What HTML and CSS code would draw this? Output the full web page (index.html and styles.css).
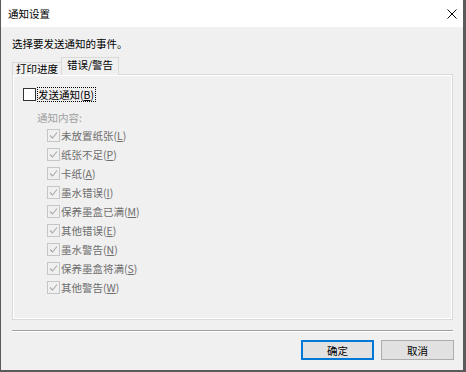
FILE: index.html
```html
<!DOCTYPE html>
<html lang="zh-CN">
<head>
    <meta charset="UTF-8">
    <title>通知设置</title>
    <link rel="stylesheet" href="styles.css">
</head>
<body>
    <div class="window">
        <div class="titlebar">
            <span class="title">通知设置</span>
            <svg class="close" width="10" height="10" viewBox="0 0 10 10">
                <path d="M0.5 0.5 L9.5 9.5 M9.5 0.5 L0.5 9.5" stroke="#000" stroke-width="1"/>
            </svg>
        </div>

        <div class="content">
            <p class="prompt">选择要发送通知的事件。</p>

            <div class="tabs">
                <div class="tab">打印进度</div>
                <div class="tab active">错误/警告</div>
            </div>

            <div class="panel">
                <label class="main-check">
                    <span class="box"></span>
                    <span class="focus">发送通知(<u>B</u>)</span>
                </label>

                <div class="group-label">通知内容:</div>

                <ul class="items">
                    <li><span class="dbox"></span>未放置纸张(<u>L</u>)</li>
                    <li><span class="dbox"></span>纸张不足(<u>P</u>)</li>
                    <li><span class="dbox"></span>卡纸(<u>A</u>)</li>
                    <li><span class="dbox"></span>墨水错误(<u>I</u>)</li>
                    <li><span class="dbox"></span>保养墨盒已满(<u>M</u>)</li>
                    <li><span class="dbox"></span>其他错误(<u>E</u>)</li>
                    <li><span class="dbox"></span>墨水警告(<u>N</u>)</li>
                    <li><span class="dbox"></span>保养墨盒将满(<u>S</u>)</li>
                    <li><span class="dbox"></span>其他警告(<u>W</u>)</li>
                </ul>
            </div>

            <div class="separator"></div>

            <div class="buttons">
                <button class="btn default">确定</button>
                <button class="btn">取消</button>
            </div>
        </div>
    </div>
</body>
</html>
```

FILE: styles.css
```css
* {
    box-sizing: border-box;
}
body {
    margin: 0;
    background-color: #5a5a5a;
    font-family: "Noto Sans CJK SC", "Noto Sans", sans-serif;
    font-size: 10.5px;
    color: #000;
}
.window {
    width: 462px;
    height: 370px;
    margin-left: 1px;
    background-color: #f0f0f0;
}
.titlebar {
    height: 27px;
    background-color: #fff;
    display: flex;
    align-items: center;
    justify-content: space-between;
    padding: 0 6px 0 7px;
}
.title {
    line-height: 14px;
}
.close {
    display: block;
}
.content {
    padding: 0 10px 0 11px;
}
.prompt {
    margin: 0;
    padding-top: 9px;
    line-height: 16px;
}
.tabs {
    display: flex;
    align-items: flex-end;
    height: 17px;
    margin-top: 6px;
    margin-bottom: -1px;
    position: relative;
}
.tab {
    height: 13px;
    width: 50px;
    line-height: 11px;
    white-space: nowrap;
    border: 1px solid #d9d9d9;
    border-bottom: none;
    background-color: #f0f0f0;
    text-align: center;
}
.tab.active {
    height: 18px;
    width: 58px;
    line-height: 14px;
    margin-left: -1px;
    background-color: #f0f0f0;
}
.panel {
    height: 246px;
    border: 1px solid #d9d9d9;
    box-shadow: inset 0 0 0 1px #fff;
    padding: 12px 10px 0 10px;
}
.main-check {
    display: flex;
    align-items: center;
    height: 15px;
}
.box {
    width: 13px;
    height: 13px;
    border: 1px solid #333;
    background-color: #fff;
    margin-right: 1px;
}
.focus {
    border: 1px dotted #000;
    line-height: 13px;
    padding: 0 1px 0 0;
}
.group-label {
    margin-top: 8px;
    margin-left: 14px;
    line-height: 16px;
    color: #a0a0a0;
}
.items {
    list-style: none;
    margin: 0;
    padding: 0 0 0 24px;
}
.items li {
    display: flex;
    align-items: center;
    height: 19px;
    color: #6d6d6d;
}
.dbox {
    width: 13px;
    height: 13px;
    border: 1px solid #c6c6c6;
    margin-right: 1px;
    background: url("data:image/svg+xml,%3Csvg xmlns='http://www.w3.org/2000/svg' width='11' height='11'%3E%3Cpath d='M2 5.5 L4.5 8 L9 2.5' fill='none' stroke='%23a8a8a8' stroke-width='1.1'/%3E%3C/svg%3E") no-repeat center;
}
.separator {
    margin-top: 10px;
    height: 2px;
    border-top: 1px solid #a0a0a0;
    border-bottom: 1px solid #fff;
}
.buttons {
    display: flex;
    justify-content: flex-end;
    gap: 7px;
    margin-top: 8px;
    margin-right: -1px;
}
.btn {
    width: 73px;
    height: 20px;
    padding: 0;
    font-family: inherit;
    font-size: 10.5px;
    background-color: #e1e1e1;
    border: 1px solid #adadad;
    color: #000;
}
.btn.default {
    border-color: #0078d7;
    box-shadow: inset 0 0 0 1px #0078d7;
}
```
